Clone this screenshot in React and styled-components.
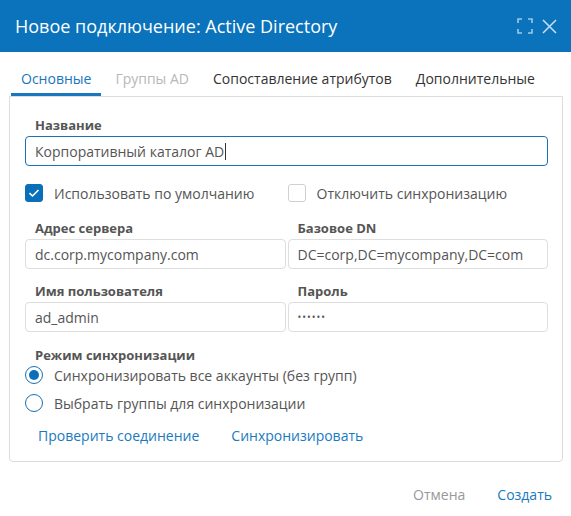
import React from 'react';
import styled, { createGlobalStyle } from 'styled-components';

const Global = createGlobalStyle`
  html, body { margin: 0; padding: 0; background: #fff; }
  body { font-family: "Open Sans", "Noto Sans", sans-serif; }
  * { box-sizing: border-box; }
`;

const Dialog = styled.div`
  width: 571px;
  height: 516px;
  background: #fff;
  display: flex;
  flex-direction: column;
`;

const Header = styled.div`
  height: 52px;
  background: #0a73bb;
  color: #fff;
  display: flex;
  align-items: center;
  justify-content: space-between;
  padding: 0 14px 0 15px;
`;

const Title = styled.div`
  font-size: 18px;
`;

const HeaderTools = styled.div`
  display: flex;
  align-items: center;
  gap: 9px;
`;

const Tabs = styled.div`
  display: flex;
  gap: 4px;
  padding: 14px 0 0 11px;
`;

const Tab = styled.div`
  height: 30px;
  padding: 0 10px;
  font-size: 14px;
  line-height: 26px;
  color: ${p => (p.$active ? '#1a76bd' : p.$disabled ? '#b8b8b8' : '#333')};
  border-bottom: 3px solid ${p => (p.$active ? '#1a76bd' : 'transparent')};
`;

const Panel = styled.div`
  margin: 0 8px 0 9px;
  border: 1px solid #dcdcdc;
  border-radius: 0 0 4px 4px;
  padding: 19px 14px 15px 15px;
  display: flex;
  flex-direction: column;
`;

const Label = styled.div`
  font-size: 13px;
  font-weight: 700;
  color: #555;
  line-height: 18px;
  padding-left: 10px;
  margin-top: ${p => p.$mt || 0}px;
  margin-bottom: 2px;
`;

const Input = styled.div`
  height: 30px;
  border: 1px solid ${p => (p.$focus ? '#1a73b8' : '#dedede')};
  border-radius: 4px;
  padding: 0 9px;
  font-size: ${p => (p.$secret ? 10 : 14)}px;
  letter-spacing: ${p => (p.$secret ? 1 : 0)}px;
  color: #555;
  display: flex;
  align-items: center;
  white-space: nowrap;
  overflow: hidden;
`;

const Caret = styled.span`
  display: inline-block;
  width: 1px;
  height: 17px;
  background: #333;
  margin-left: 1px;
`;

const Grid = styled.div`
  display: grid;
  grid-template-columns: 1fr 1fr;
  column-gap: 2px;
  margin-top: ${p => p.$mt || 0}px;
`;

const Field = styled.div`
  display: flex;
  flex-direction: column;
`;

const CheckRow = styled.div`
  display: flex;
  align-items: center;
  gap: 11px;
  font-size: 14px;
  color: #555;
  height: 18px;
`;

const Box = styled.span`
  width: 18px;
  height: 18px;
  border-radius: 3px;
  flex: none;
  display: flex;
  align-items: center;
  justify-content: center;
  background: ${p => (p.$checked ? '#0a6fb9' : '#fff')};
  border: 1px solid ${p => (p.$checked ? '#0a6fb9' : '#d0d0d0')};
`;

const RadioList = styled.div`
  display: flex;
  flex-direction: column;
  gap: 10px;
`;

const Radio = styled.span`
  width: 18px;
  height: 18px;
  border-radius: 50%;
  border: 1.5px solid #1a6fb0;
  flex: none;
  display: flex;
  align-items: center;
  justify-content: center;
  &::after {
    content: '';
    width: 10px;
    height: 10px;
    border-radius: 50%;
    background: ${p => (p.$checked ? '#0a6fb9' : 'transparent')};
  }
`;

const Links = styled.div`
  display: flex;
  gap: 32px;
  padding-left: 13px;
  margin-top: 14px;
`;

const Link = styled.span`
  font-size: 14px;
  color: #1a7ac0;
  line-height: 20px;
`;

const Footer = styled.div`
  display: flex;
  justify-content: flex-end;
  gap: 32px;
  padding: 23px 19px 0 0;
`;

const FooterBtn = styled.span`
  font-size: 14px;
  color: ${p => (p.$primary ? '#1a7ac0' : '#999')};
`;

const Check = () => (
  <svg width="12" height="10" viewBox="0 0 12 10">
    <path d="M1.5 5.2 L4.5 8 L10.5 2" fill="none" stroke="#fff" strokeWidth="1.6" />
  </svg>
);

export default function App() {
  return (
    <>
      <Global />
      <Dialog>
        <Header>
          <Title>Новое подключение: Active Directory</Title>
          <HeaderTools>
            <svg width="16" height="16" viewBox="0 0 16 16" fill="none" stroke="#9fc8e8" strokeWidth="1.6">
              <path d="M1 5V1h4M11 1h4v4M15 11v4h-4M5 15H1v-4" />
            </svg>
            <svg width="15" height="15" viewBox="0 0 15 15" fill="none" stroke="#c9e0f2" strokeWidth="1.5">
              <path d="M1 1L14 14M14 1L1 14" />
            </svg>
          </HeaderTools>
        </Header>
        <Tabs>
          <Tab $active>Основные</Tab>
          <Tab $disabled>Группы AD</Tab>
          <Tab>Сопоставление атрибутов</Tab>
          <Tab>Дополнительные</Tab>
        </Tabs>
        <Panel>
          <Label>Название</Label>
          <Input $focus>Корпоративный каталог AD<Caret /></Input>
          <Grid $mt={18}>
            <CheckRow><Box $checked><Check /></Box>Использовать по умолчанию</CheckRow>
            <CheckRow><Box />Отключить синхронизацию</CheckRow>
          </Grid>
          <Grid $mt={17}>
            <Field>
              <Label>Адрес сервера</Label>
              <Input>dc.corp.mycompany.com</Input>
            </Field>
            <Field>
              <Label>Базовое DN</Label>
              <Input>DC=corp,DC=mycompany,DC=com</Input>
            </Field>
          </Grid>
          <Grid $mt={13}>
            <Field>
              <Label>Имя пользователя</Label>
              <Input>ad_admin</Input>
            </Field>
            <Field>
              <Label>Пароль</Label>
              <Input $secret>••••••</Input>
            </Field>
          </Grid>
          <Label $mt={14}>Режим синхронизации</Label>
          <RadioList>
            <CheckRow><Radio $checked />Синхронизировать все аккаунты (без групп)</CheckRow>
            <CheckRow><Radio />Выбрать группы для синхронизации</CheckRow>
          </RadioList>
          <Links>
            <Link>Проверить соединение</Link>
            <Link>Синхронизировать</Link>
          </Links>
        </Panel>
        <Footer>
          <FooterBtn>Отмена</FooterBtn>
          <FooterBtn $primary>Создать</FooterBtn>
        </Footer>
      </Dialog>
    </>
  );
}
